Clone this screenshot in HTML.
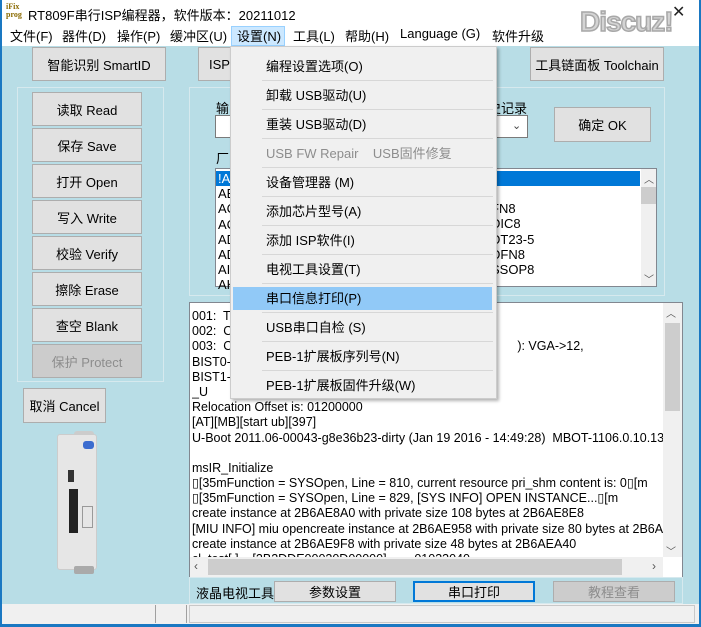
<!DOCTYPE html>
<html><head><meta charset="utf-8"><style>
*{margin:0;padding:0;box-sizing:border-box}
body{width:701px;height:627px;overflow:hidden;position:relative;background:#b8dde6;font-family:"Liberation Sans","Noto Sans CJK SC",sans-serif;font-size:13px;color:#000}
.a{position:absolute}
.btn{position:absolute;background:#e1e1e1;border:1px solid #adadad;display:flex;align-items:center;justify-content:center;font-size:13px;white-space:nowrap}
.grp{position:absolute;border:1px solid #d6e9ee}
.mi{position:absolute;left:35px;font-size:13px;white-space:nowrap}
.sep{position:absolute;left:31px;right:3px;height:1px;background:#d7d7d7}
.log div{height:15.2px;line-height:15.2px;white-space:nowrap}
</style></head><body>
<div class="a" style="left:0;top:0;width:2px;height:627px;background:#1a78c2"></div>
<div class="a" style="right:0;top:0;width:2px;height:627px;background:#1a78c2"></div>
<div class="a" style="left:0;bottom:0;width:701px;height:3px;background:#1a78c2"></div>
<div class="a" style="left:2px;top:0;width:697px;height:46px;background:#fff"></div>
<div class="a" style="left:6px;top:3px;font-size:8px;line-height:8px;color:#8a6a00;font-family:'Liberation Serif',serif;font-weight:bold">iFix<br>prog</div>
<div class="a" style="left:28px;top:5px;font-size:13px">RT809F串行ISP编程器，软件版本：20211012</div>
<div class="a" style="left:580px;top:6px;font-size:28px;font-weight:bold;color:#d4d4d4;-webkit-text-stroke:1.5px #a8a8a8;letter-spacing:-1px">Discuz!</div>
<div class="a" style="left:672px;top:2px;font-size:16px;color:#222">✕</div>
<div class="a" style="left:231px;top:26px;width:54px;height:20px;background:#cce8ff;border:1px solid #99d1ff"></div>
<div class="a" style="top:26px;left:10px;white-space:nowrap;font-size:13px">文件(F)</div>
<div class="a" style="top:26px;left:62px;font-size:13px">器件(D)</div>
<div class="a" style="top:26px;left:117px;font-size:13px">操作(P)</div>
<div class="a" style="top:26px;left:170px;font-size:13px">缓冲区(U)</div>
<div class="a" style="top:26px;left:237px;font-size:13px">设置(N)</div>
<div class="a" style="top:26px;left:293px;font-size:13px">工具(L)</div>
<div class="a" style="top:26px;left:345px;font-size:13px">帮助(H)</div>
<div class="a" style="top:26px;left:400px;font-size:13px">Language (G)</div>
<div class="a" style="top:26px;left:492px;font-size:13px">软件升级</div>
<div class="btn" style="left:32px;top:47px;width:134px;height:34px">智能识别 SmartID</div>
<div class="btn" style="left:198px;top:47px;width:134px;height:34px;justify-content:flex-start;padding-left:10px">ISP</div>
<div class="btn" style="left:530px;top:47px;width:134px;height:34px">工具链面板 Toolchain</div>
<div class="grp" style="left:17px;top:87px;width:147px;height:295px"></div>
<div class="btn" style="left:32px;top:92px;width:110px;height:34px">读取 Read</div>
<div class="btn" style="left:32px;top:128px;width:110px;height:34px">保存 Save</div>
<div class="btn" style="left:32px;top:164px;width:110px;height:34px">打开 Open</div>
<div class="btn" style="left:32px;top:200px;width:110px;height:34px">写入 Write</div>
<div class="btn" style="left:32px;top:236px;width:110px;height:34px">校验 Verify</div>
<div class="btn" style="left:32px;top:272px;width:110px;height:34px">擦除 Erase</div>
<div class="btn" style="left:32px;top:308px;width:110px;height:34px">查空 Blank</div>
<div class="btn" style="left:32px;top:344px;width:110px;height:34px;background:#cccccc;color:#8d8d8d">保护 Protect</div>
<div class="btn" style="left:23px;top:388px;width:83px;height:35px">取消 Cancel</div>
<div class="a" style="left:74px;top:431px;width:20px;height:8px;background:#ccc;border-radius:3px"></div>
<div class="a" style="left:57px;top:434px;width:40px;height:136px;background:#e6e6e6;border:1px solid #ccc;border-radius:3px"></div>
<div class="a" style="left:74px;top:566px;width:20px;height:8px;background:#aaa;border-radius:2px"></div>
<div class="a" style="left:83px;top:441px;width:11px;height:8px;background:#3b6ccf;border-radius:3px"></div>
<div class="a" style="left:69px;top:489px;width:9px;height:44px;background:#222"></div>
<div class="a" style="left:68px;top:470px;width:6px;height:12px;background:#333"></div>
<div class="a" style="left:82px;top:506px;width:11px;height:22px;border:1px solid #999"></div>
<div class="grp" style="left:189px;top:87px;width:476px;height:209px"></div>
<div class="a" style="left:216px;top:98px">输</div>
<div class="a" style="left:215px;top:115px;width:20px;height:23px;background:#fff;border:1px solid #7a7a7a"></div>
<div class="a" style="left:488px;top:98px">史记录</div>
<div class="a" style="left:496px;top:115px;width:32px;height:23px;background:#fff;border:1px solid #7a7a7a;border-left:none"></div>
<div class="a" style="left:512px;top:119px;font-size:11px;color:#444">⌄</div>
<div class="btn" style="left:554px;top:107px;width:97px;height:35px">确定 OK</div>
<div class="a" style="left:216px;top:148px">厂</div>
<div class="a" style="left:215px;top:168px;width:442px;height:119px;background:#fff;border:1px solid #828790"></div>
<div class="a" style="left:216px;top:171px;width:424px;height:15px;background:#0078d7"></div>
<div class="a" style="left:641px;top:169px;width:15px;height:117px;background:#f0f0f0"></div>
<div class="a" style="left:641px;top:187px;width:15px;height:17px;background:#cdcdcd"></div>
<div class="a" style="left:644px;top:171px;font-size:10px;color:#555">︿</div>
<div class="a" style="left:644px;top:271px;font-size:10px;color:#555">﹀</div>
<div class="a log" style="left:218px;top:171px;font-size:13px;line-height:15px">
<div style="color:#fff">!A</div><div>AE</div><div>AC</div><div>AC</div><div>AD</div><div>AD</div><div>AI</div><div>AK</div></div>
<div class="a log" style="left:491px;top:186px;font-size:13px">
<div>)</div><div>FN8</div><div>DIC8</div><div>DT23-5</div><div>DFN8</div><div>SSOP8</div></div>
<div class="a" style="left:189px;top:302px;width:494px;height:276px;background:#fff;border:1px solid #828790"></div>
<div class="a" style="left:663px;top:303px;width:19px;height:254px;background:#f0f0f0"></div>
<div class="a" style="left:665px;top:323px;width:15px;height:88px;background:#cdcdcd"></div>
<div class="a" style="left:666px;top:305px;font-size:10px;color:#555">︿</div>
<div class="a" style="left:666px;top:543px;font-size:10px;color:#555">﹀</div>
<div class="a" style="left:190px;top:557px;width:473px;height:20px;background:#f0f0f0"></div>
<div class="a" style="left:208px;top:559px;width:414px;height:16px;background:#cdcdcd"></div>
<div class="a" style="left:194px;top:559px;font-size:12px;color:#555">‹</div>
<div class="a" style="left:652px;top:559px;font-size:12px;color:#555">›</div>
<div class="a log" style="left:192px;top:309px;width:471px;height:248px;overflow:hidden;font-size:12.5px">
<div>001:&nbsp; T.</div><div>002:&nbsp; C</div><div>003:&nbsp; C<span style="margin-left:285px">): VGA-&gt;12,</span></div><div>BIST0-</div><div>BIST1-</div><div>_U</div>
<div>Relocation Offset is: 01200000</div><div>[AT][MB][start ub][397]</div><div>U-Boot 2011.06-00043-g8e36b23-dirty (Jan 19 2016 - 14:49:28)&nbsp; MBOT-1106.0.10.130</div><div>&nbsp;</div>
<div>msIR_Initialize</div><div>▯[35mFunction = SYSOpen, Line = 810, current resource pri_shm content is: 0▯[m</div><div>▯[35mFunction = SYSOpen, Line = 829, [SYS INFO] OPEN INSTANCE...▯[m</div>
<div>create instance at 2B6AE8A0 with private size 108 bytes at 2B6AE8E8</div><div>[MIU INFO] miu opencreate instance at 2B6AE958 with private size 80 bytes at 2B6AE9A</div><div>create instance at 2B6AE9F8 with private size 48 bytes at 2B6AEA40</div><div>cl_test[.]... [2B2DDE00020D00000] ...... 01033040</div></div>
<div class="grp" style="left:189px;top:577px;width:494px;height:27px"></div>
<div class="a" style="left:196px;top:583px">液晶电视工具</div>
<div class="btn" style="left:274px;top:581px;width:122px;height:21px">参数设置</div>
<div class="btn" style="left:413px;top:581px;width:122px;height:21px;border:2px solid #0078d7">串口打印</div>
<div class="btn" style="left:553px;top:581px;width:122px;height:21px;background:#cccccc;color:#8d8d8d">教程查看</div>
<div class="a" style="left:2px;top:604px;width:697px;height:20px;background:#f0f0f0"></div>
<div class="a" style="left:155px;top:605px;width:1px;height:18px;background:#a0a0a0"></div>
<div class="a" style="left:186px;top:605px;width:1px;height:18px;background:#a0a0a0"></div>
<div class="a" style="left:189px;top:605px;width:506px;height:18px;border:1px solid #c8c8c8"></div>
<div class="a" style="left:230px;top:46px;width:267px;height:353px;background:#f0f0f0;border:1px solid #cccccc;box-shadow:2px 2px 3px rgba(0,0,0,0.3)">
<div class="a" style="left:2px;top:240px;width:259px;height:23px;background:#91c9f7"></div>
<div class="mi" style="top:9px">编程设置选项(O)</div><div class="sep" style="top:33px"></div>
<div class="mi" style="top:38px">卸载 USB驱动(U)</div><div class="sep" style="top:62px"></div>
<div class="mi" style="top:67px">重装 USB驱动(D)</div><div class="sep" style="top:91px"></div>
<div class="mi" style="top:96px;color:#8d8d8d">USB FW Repair&nbsp;&nbsp;&nbsp;&nbsp;USB固件修复</div><div class="sep" style="top:120px"></div>
<div class="mi" style="top:125px">设备管理器 (M)</div><div class="sep" style="top:149px"></div>
<div class="mi" style="top:154px">添加芯片型号(A)</div><div class="sep" style="top:178px"></div>
<div class="mi" style="top:183px">添加 ISP软件(I)</div><div class="sep" style="top:207px"></div>
<div class="mi" style="top:212px">电视工具设置(T)</div><div class="sep" style="top:236px"></div>
<div class="mi" style="top:241px">串口信息打印(P)</div><div class="sep" style="top:265px"></div>
<div class="mi" style="top:270px">USB串口自检 (S)</div><div class="sep" style="top:294px"></div>
<div class="mi" style="top:299px">PEB-1扩展板序列号(N)</div><div class="sep" style="top:323px"></div>
<div class="mi" style="top:328px">PEB-1扩展板固件升级(W)</div>
</div>
</body></html>
